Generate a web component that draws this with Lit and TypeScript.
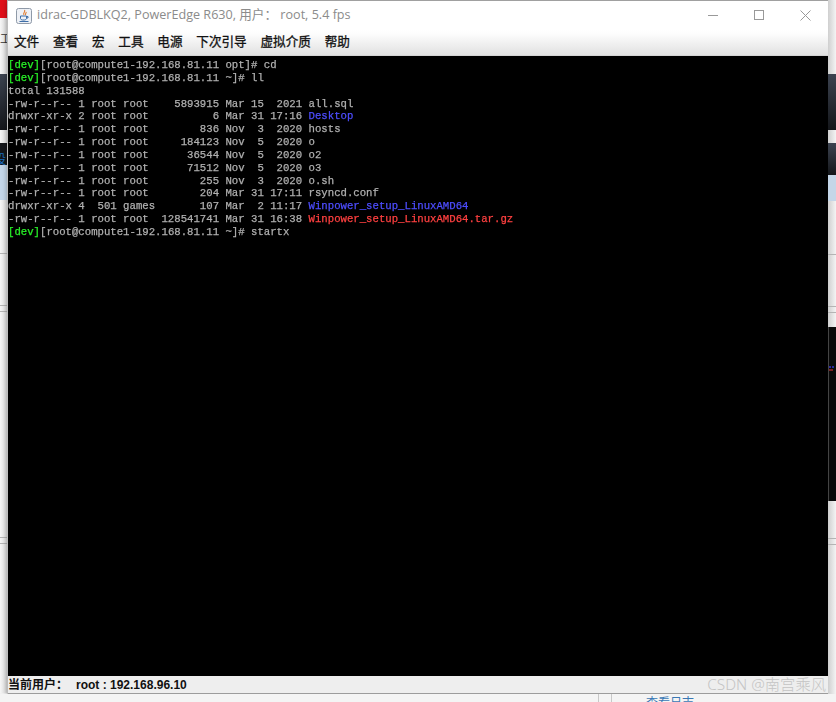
import { LitElement, html, css, svg } from "lit";
import { customElement } from "lit/decorators.js";

type Seg = [string, string?];
const G = "g", B = "b", R = "r";
const prompt = (dir: string, cmd: string): Seg[] => [
  ["[dev]", G],
  [`[root@compute1-192.168.81.11 ${dir}]# ${cmd}`],
];
const LINES: Seg[][] = [
  prompt("opt", "cd"),
  prompt("~", "ll"),
  [["total 131588"]],
  [["-rw-r--r-- 1 root root    5893915 Mar 15  2021 all.sql"]],
  [["drwxr-xr-x 2 root root          6 Mar 31 17:16 "], ["Desktop", B]],
  [["-rw-r--r-- 1 root root        836 Nov  3  2020 hosts"]],
  [["-rw-r--r-- 1 root root     184123 Nov  5  2020 o"]],
  [["-rw-r--r-- 1 root root      36544 Nov  5  2020 o2"]],
  [["-rw-r--r-- 1 root root      71512 Nov  5  2020 o3"]],
  [["-rw-r--r-- 1 root root        255 Nov  3  2020 o.sh"]],
  [["-rw-r--r-- 1 root root        204 Mar 31 17:11 rsyncd.conf"]],
  [["drwxr-xr-x 4  501 games       107 Mar  2 11:17 "], ["Winpower_setup_LinuxAMD64", B]],
  [["-rw-r--r-- 1 root root  128541741 Mar 31 16:38 "], ["Winpower_setup_LinuxAMD64.tar.gz", R]],
  prompt("~", "startx"),
];
const MENU = ["文件", "查看", "宏", "工具", "电源", "下次引导", "虚拟介质", "帮助"];

@customElement("app-root")
export class AppRoot extends LitElement {
  static styles = css`
    :host { display: block; width: 836px; height: 702px; overflow: hidden; background: #f2f2f2; }
    .desk { display: grid; grid-template-columns: 7px 821px 8px; grid-template-rows: 694px 8px; width: 836px; height: 702px; }
    .side { display: flex; flex-direction: column; overflow: hidden; background: #f1f1f1; }
    .s { flex: none; overflow: hidden; box-sizing: border-box; }
    .red { height: 18px; background: #e0101a; }
    .dk { background: linear-gradient(#3c4350,#14161a); }
    .lt { background: linear-gradient(90deg,#f6f6f6,#dcdcdc); }
    .right .lt { background: linear-gradient(90deg,#cfcfcf,#f4f4f4); }
    .blue { background: #c4d6e8; }
    .ln { height: 1px; background: #b4b4b4; }
    .blk { background: #0a0a0a; border-left: 1px solid #444; }
    .frag { font: 11px/12px "Noto Sans CJK SC", sans-serif; color: #333; padding-top: 14px; white-space: nowrap; }
    .gl { font: 12px/12px "Noto Sans CJK SC", sans-serif; color: #1c6fc0; background: #14161a; padding-top: 10px; margin-left: -6px; white-space: nowrap; }
    .dots { display: block; }
    .win { display: flex; flex-direction: column; border-top: 1px solid #a0a0a0; border-left: 1px solid #bdbdbd; background: #fff; box-shadow: 0 1px 5px rgba(0,0,0,.35); min-width: 0; }
    .title { flex: none; height: 29px; display: flex; align-items: center; background: #fff; font: 12.6px/1 "Open Sans", "Noto Sans CJK SC", sans-serif; color: #8b8b8b; }
    .ico { margin: 0 5px 0 8px; flex: none; display: block; }
    .tt { flex: 1; white-space: pre; }
    .cap { flex: none; width: 46px; height: 29px; display: flex; align-items: center; justify-content: center; }
    .cap svg { display: block; }
    .menu { flex: none; height: 26px; box-sizing: border-box; display: flex; align-items: center; gap: 13.8px; padding: 0 0 2px 6px; background: linear-gradient(#fff 0,#fdfdfd 15%,#e6e6e6 85%,#e2e2e2); border-bottom: 1px solid #d4d4d4; font: 12.6px/1 "Noto Sans CJK SC", sans-serif; color: #111; -webkit-text-stroke: .3px #111; }
    .term { flex: 1; min-height: 0; background: #000; padding: 3px 0 0 0; font: 10.67px/12.85px "Liberation Mono", "DejaVu Sans Mono", monospace; color: #b0b0b0; white-space: pre; overflow: hidden; -webkit-text-stroke: .25px currentColor; }
    .l { height: 12.85px; filter: blur(.25px); }
    .g { color: #28f028; }
    .b { color: #4d4dff; }
    .r { color: #ff4040; }
    .status { flex: none; height: 18px; box-sizing: border-box; display: flex; align-items: center; justify-content: flex-start; background: #eeeeee; border-bottom: 1px solid #9c9c9c; font: bold 12px/1 "Liberation Sans", "Noto Sans CJK SC", sans-serif; color: #111; white-space: pre; }
    .lab { margin-right: 8px; }
    .mark { margin-left: auto; margin-right: 2px; font: 300 15.3px/17px "Noto Sans", "Noto Sans CJK SC", sans-serif; color: #c4c4c4; }
    .bot { grid-column: 1 / 4; display: flex; background: #f4f4f4; overflow: hidden; padding-left: 598px; }
    .cell { flex: none; width: 14px; border-left: 1px solid #c8c8c8; border-right: 1px solid #c8c8c8; box-sizing: border-box; }
    .link { margin-left: 34px; padding-top: 2px; font: 12px/14px "Liberation Sans", "Noto Sans CJK SC", sans-serif; color: #3a78b4; }
  `;

  private icon() {
    return svg`<svg class="ico" width="16" height="16" viewBox="0 0 16 16">
      <rect x=".5" y=".5" width="15" height="15" rx="2" fill="#eef1f6" stroke="#8f9aa8"/>
      <path d="M8.500 2c1.500 1.800-2 2.800-.5 4.800M10 4c.8 1-1.300 1.500-.3 3" fill="none" stroke="#e0792a" stroke-width="1.100"/>
      <path d="M4.500 8h6v2.500a2 2 0 0 1-2 1.500h-2a2 2 0 0 1-2-1.500zM10.500 8.500h1.500v1.500h-1.500" fill="none" stroke="#3f6fa8"/>
      <path d="M3.500 13.500h9" stroke="#3f6fa8"/>
    </svg>`;
  }

  render() {
    return html`<div class="desk">
      <div class="side">
        <div class="s red"></div>
        <div class="s lt frag" style="height:56px">工</div>
        <div class="s dk" style="height:56px"></div>
        <div class="s lt" style="height:13px"></div>
        <div class="s gl" style="height:22px">设</div>
        <div class="s blue" style="height:35px"></div>
        <div class="s lt" style="height:53px"></div><div class="s ln"></div>
        <div class="s lt" style="height:51px"></div><div class="s ln"></div>
        <div class="s lt" style="height:5px"></div><div class="s ln"></div>
        <div class="s lt" style="height:225px"></div><div class="s ln"></div>
        <div class="s lt" style="height:5px"></div><div class="s ln"></div>
        <div class="s lt" style="height:149px"></div>
      </div>
      <div class="win">
        <div class="title">
          ${this.icon()}
          <span class="tt">idrac-GDBLKQ2, PowerEdge R630, 用户： root, 5.4 fps</span>
          <div class="cap"><svg width="11" height="11"><path d="M0 5.500h10" stroke="#999"/></svg></div>
          <div class="cap"><svg width="11" height="11"><rect x=".5" y=".5" width="9" height="9" fill="none" stroke="#999"/></svg></div>
          <div class="cap"><svg width="11" height="11"><path d="M.5.500l10 10M10.500.500l-10 10" stroke="#999"/></svg></div>
        </div>
        <div class="menu">${MENU.map((m) => html`<span>${m}</span>`)}</div>
        <div class="term">${LINES.map(
          (l) => html`<div class="l">${l.map(([t, c]) => html`<span class=${c ?? ""}>${t}</span>`)}</div>`
        )}</div>
        <div class="status"><span class="lab">当前用户：</span><span>root : 192.168.96.10</span><span class="mark">CSDN @南宫乘风</span></div>
      </div>
      <div class="side right">
        <div class="s lt" style="height:74px"></div>
        <div class="s dk" style="height:56px"></div>
        <div class="s lt" style="height:13px"></div>
        <div class="s dk" style="height:32px"></div>
        <div class="s blue" style="height:26px"></div>
        <div class="s lt" style="height:53px"></div><div class="s ln"></div>
        <div class="s lt" style="height:51px"></div><div class="s ln"></div>
        <div class="s lt" style="height:5px"></div><div class="s ln"></div>
        <div class="s lt" style="height:14px"></div>
        <div class="s blk" style="height:174px">
          <svg class="dots" width="8" height="174"><path d="M0 40h2M3 40h2" stroke="#2a2a9c" stroke-width="2"/><path d="M0 43h4" stroke="#7a2020" stroke-width="2"/></svg>
        </div>
        <div class="s lt" style="height:37px"></div><div class="s ln"></div>
        <div class="s lt" style="height:5px"></div><div class="s ln"></div>
        <div class="s lt" style="height:149px"></div>
      </div>
      <div class="bot"><div class="cell"></div><span class="link">查看日志</span></div>
    </div>`;
  }
}
